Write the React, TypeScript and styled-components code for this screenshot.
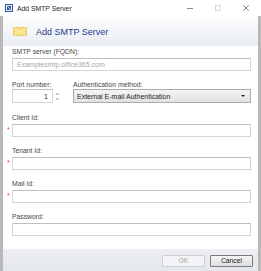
import React from 'react';
import styled, { createGlobalStyle } from 'styled-components';

const GlobalStyle = createGlobalStyle`
  html, body {
    margin: 0;
    padding: 0;
    background: #ffffff;
  }
  body {
    font-family: "Liberation Sans", Arial, sans-serif;
  }
`;

const Window = styled.div`
  width: 261px;
  height: 271px;
  display: flex;
  flex-direction: column;
  background: #ffffff;
  overflow: hidden;
`;

const TitleBar = styled.div`
  height: 16px;
  flex-shrink: 0;
  display: flex;
  align-items: center;
  padding-left: 5px;
`;

const TitleText = styled.span`
  margin-left: 4px;
  font-size: 6.8px;
  color: #1e1e1e;
`;

const Controls = styled.div`
  margin-left: auto;
  padding-right: 1px;
  display: flex;
`;

const ControlButton = styled.div`
  width: 28px;
  height: 16px;
  display: flex;
  align-items: center;
  justify-content: center;
`;

const Body = styled.div`
  flex: 1;
  display: flex;
  flex-direction: column;
  border-left: 3px solid #b8b8b8;
  border-right: 3px solid #b8b8b8;
`;

const Header = styled.div`
  height: 30px;
  flex-shrink: 0;
  display: flex;
  align-items: center;
  padding-left: 10px;
  background: linear-gradient(to bottom, #fdfdfe 0%, #e9edf2 100%);
`;

const HeaderTitle = styled.span`
  margin-left: 9px;
  font-size: 9px;
  color: #23398a;
  margin-top: 1px;
`;

const Form = styled.div`
  flex: 1;
  display: flex;
  flex-direction: column;
  gap: 10px;
  padding: 2px 7px 13px 9px;
`;

const Field = styled.div<{ $pad?: number }>`
  display: flex;
  flex-direction: column;
  min-width: 0;
  padding-bottom: ${({ $pad }) => $pad ?? 0}px;
`;

const Label = styled.label<{ $gap?: number }>`
  height: 8px;
  line-height: 8px;
  font-size: 6.8px;
  color: #474747;
  white-space: nowrap;
  margin-bottom: ${({ $gap }) => $gap ?? 2}px;
`;

const BoxWrap = styled.div`
  position: relative;
  display: flex;
  align-items: center;
`;

const Required = styled.span`
  position: absolute;
  left: -5px;
  top: 2px;
  font-size: 7px;
  line-height: 7px;
  color: #e0393e;
`;

const TextBox = styled.div<{ $h?: number; $align?: string }>`
  box-sizing: border-box;
  flex: 1;
  height: ${({ $h }) => $h ?? 13}px;
  border: 1px solid #d2d5d9;
  border-top-color: #bcbfc4;
  background: #ffffff;
  display: flex;
  align-items: center;
  justify-content: ${({ $align }) => $align ?? 'flex-start'};
  padding: 0 4px;
  font-size: 7px;
  color: #2a2a2a;
`;

const Placeholder = styled.span`
  color: #a8a8a8;
`;

const PortRow = styled.div`
  display: grid;
  grid-template-columns: 61px 1fr;
`;

const PortBox = styled.div`
  display: flex;
  align-items: center;
  width: 47px;
`;

const Spinner = styled.div`
  margin-left: 3px;
  display: flex;
  flex-direction: column;
  gap: 3px;
`;

const Select = styled.div`
  box-sizing: border-box;
  height: 14px;
  border: 1px solid #a9abaf;
  background: linear-gradient(to bottom, #f4f4f4 0%, #e2e2e2 100%);
  display: flex;
  align-items: center;
  padding: 0 5px 0 3px;
  font-size: 7px;
  color: #1f1f1f;
`;

const SelectArrow = styled.span`
  margin-left: auto;
  width: 0;
  height: 0;
  border-left: 2px solid transparent;
  border-right: 2px solid transparent;
  border-top: 2.5px solid #202020;
`;

const Footer = styled.div`
  height: 22px;
  flex-shrink: 0;
  box-sizing: border-box;
  display: flex;
  justify-content: flex-end;
  align-items: flex-start;
  gap: 5px;
  padding: 6px 5px 0 0;
  background: linear-gradient(to bottom, #eceef2 0%, #e4e7eb 100%);
`;

const Button = styled.button<{ $disabled?: boolean }>`
  box-sizing: border-box;
  width: 43px;
  height: 12px;
  padding: 0;
  font-family: "Liberation Sans", Arial, sans-serif;
  font-size: 6.8px;
  line-height: 10px;
  color: ${({ $disabled }) => ($disabled ? '#a6a6a6' : '#1a1a1a')};
  border: 1px solid ${({ $disabled }) => ($disabled ? '#cfd1d4' : '#7a7a7a')};
  border-radius: 1px;
  background: ${({ $disabled }) =>
    $disabled ? '#f2f3f5' : 'linear-gradient(to bottom, #f6f6f6 0%, #dedede 100%)'};
`;

const AppIcon = () => (
  <svg width="8" height="8" viewBox="0 0 8 8">
    <rect x="0.5" y="0.5" width="7" height="7" fill="#dfe7f5" stroke="#3c5aa5" />
    <rect x="2" y="2" width="4" height="4" fill="#3c5aa5" />
    <path d="M2.5 2.5 L5.5 5.5" stroke="#ffffff" strokeWidth="0.8" />
  </svg>
);

const Envelope = () => (
  <svg width="14" height="9" viewBox="0 0 14 9">
    <rect x="0.5" y="0.5" width="13" height="8" fill="#f6de82" stroke="#ebcf63" />
    <path d="M0.8 0.8 L7 5 L13.2 0.8" stroke="#fcf1c4" fill="none" strokeWidth="0.9" />
    <path d="M0.8 8.2 L5.6 4 M13.2 8.2 L8.4 4" stroke="#fcf1c4" fill="none" strokeWidth="0.9" />
  </svg>
);

const Chevron = ({ up }: { up?: boolean }) => (
  <svg width="3" height="2" viewBox="0 0 3 2">
    <path d={up ? 'M0 2 L1.5 0.3 L3 2' : 'M0 0 L1.5 1.7 L3 0'} stroke="#6e6e6e" strokeWidth="0.7" fill="none" />
  </svg>
);

const TextField: React.FC<{ label: string; required?: boolean; placeholder?: string }> = ({
  label,
  required,
  placeholder,
}) => (
  <Field>
    <Label>{label}</Label>
    <BoxWrap>
      {required && <Required>*</Required>}
      <TextBox>{placeholder && <Placeholder>{placeholder}</Placeholder>}</TextBox>
    </BoxWrap>
  </Field>
);

const App: React.FC = () => {
  return (
    <>
      <GlobalStyle />
      <Window>
        <TitleBar>
          <AppIcon />
          <TitleText>Add SMTP Server</TitleText>
          <Controls>
            <ControlButton>
              <svg width="6" height="6" viewBox="0 0 6 6">
                <path d="M0 3.5 H6" stroke="#6a6a6a" strokeWidth="0.8" />
              </svg>
            </ControlButton>
            <ControlButton>
              <svg width="6" height="6" viewBox="0 0 6 6">
                <rect x="0.5" y="0.5" width="5" height="5" fill="none" stroke="#d0d0d0" strokeWidth="0.8" />
              </svg>
            </ControlButton>
            <ControlButton>
              <svg width="6" height="6" viewBox="0 0 6 6">
                <path d="M0.3 0.3 L5.7 5.7 M5.7 0.3 L0.3 5.7" stroke="#5a5a5a" strokeWidth="0.8" />
              </svg>
            </ControlButton>
          </Controls>
        </TitleBar>
        <Body>
          <Header>
            <Envelope />
            <HeaderTitle>Add SMTP Server</HeaderTitle>
          </Header>
          <Form>
            <TextField label="SMTP server (FQDN):" placeholder="Examplesmtp.office365.com" />
            <PortRow>
              <Field $pad={1}>
                <Label $gap={0}>Port number:</Label>
                <PortBox>
                  <TextBox $h={14} $align="flex-end">1</TextBox>
                  <Spinner>
                    <Chevron up />
                    <Chevron />
                  </Spinner>
                </PortBox>
              </Field>
              <Field>
                <Label $gap={0}>Authentication method:</Label>
                <Select>
                  External E-mail Authentication
                  <SelectArrow />
                </Select>
              </Field>
            </PortRow>
            <TextField label="Client Id:" required />
            <TextField label="Tenant Id:" required />
            <TextField label="Mail Id:" required />
            <TextField label="Password:" />
          </Form>
          <Footer>
            <Button $disabled>OK</Button>
            <Button>Cancel</Button>
          </Footer>
        </Body>
      </Window>
    </>
  );
};

export default App;
